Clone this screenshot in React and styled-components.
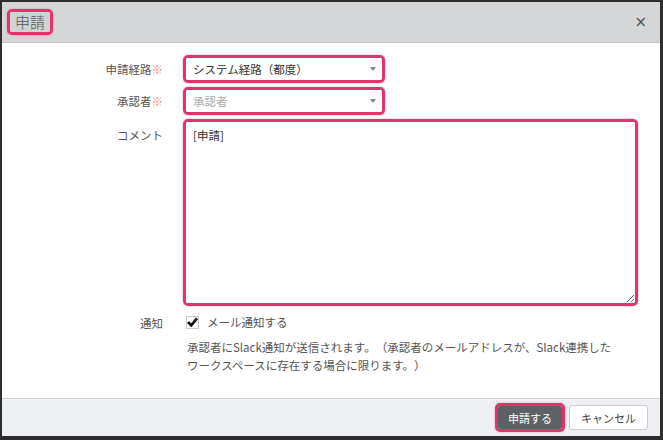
import React from 'react';
import styled, { createGlobalStyle } from 'styled-components';

const GlobalStyle = createGlobalStyle`
  html, body {
    margin: 0;
    padding: 0;
    background: #ffffff;
  }
  body {
    font-family: "Noto Sans CJK JP", "Noto Sans", sans-serif;
    color: #333;
    text-spacing-trim: space-all;
  }
`;

const Frame = styled.div`
  width: 663px;
  height: 440px;
  box-sizing: border-box;
  border-style: solid;
  border-color: #2e2e2e;
  border-width: 2px 3px 4px 2px;
  display: flex;
  flex-direction: column;
  background: #fff;
  overflow: hidden;
`;

/* pink annotation frame drawn around the highlighted parts */
const Highlight = styled.div`
  display: ${p => (p.$block ? 'flex' : 'inline-flex')};
  align-items: center;
  box-sizing: border-box;
  border: 3px solid #e2336b;
  border-radius: 5px;
  box-shadow: 0 0 2px rgba(226, 51, 107, 0.55);
  width: ${p => p.$width || 'auto'};
  height: ${p => p.$height || 'auto'};
  overflow: hidden;
`;

const Header = styled.div`
  height: 40px;
  flex-shrink: 0;
  background: #d4d6d8;
  border-bottom: 1px solid #c2c4c6;
  display: flex;
  align-items: center;
  justify-content: space-between;
  padding: 0 13px 0 5px;
`;

const Title = styled.span`
  font-size: 15px;
  line-height: 20px;
  font-weight: 300;
  color: #555;
  padding: 0 5px;
  background: #d0d2d4;
`;

const Close = styled.span`
  font-family: "DejaVu Sans", sans-serif;
  font-size: 15px;
  color: #555;
  line-height: 1;
`;

const Body = styled.div`
  flex: 1;
  display: grid;
  grid-template-columns: 161px 1fr;
  column-gap: 20px;
  row-gap: 4px;
  align-content: start;
  padding: 12px 22px 0 0;
`;

const Label = styled.div`
  font-size: 11.5px;
  color: #555;
  text-align: right;
  align-self: ${p => (p.$top ? 'start' : 'center')};
  padding-top: ${p => p.$pad || 0}px;
`;

const Required = styled.span`
  color: #f08a8a;
`;

const Select = styled.div`
  flex: 1;
  align-self: stretch;
  position: relative;
  background: #fff;
  font-size: 11.5px;
  line-height: 22px;
  padding: 0 7px;
  color: ${p => (p.$placeholder ? '#aaa' : '#333')};

  &::after {
    content: '';
    position: absolute;
    right: 6px;
    top: 9px;
    border-left: 3px solid transparent;
    border-right: 3px solid transparent;
    border-top: 4px solid #888;
  }
`;

const Comment = styled.textarea`
  flex: 1;
  align-self: stretch;
  border: none;
  outline: none;
  resize: both;
  margin: 0;
  padding: 5px 7px;
  font-family: "Noto Sans CJK JP", "Noto Sans", sans-serif;
  font-size: 11.5px;
  line-height: 16px;
  color: #333;
  background: #fff;
`;

const NotifyRow = styled.div`
  display: flex;
  align-items: center;
  gap: 8px;
  padding: 3px 0 0 3px;
`;

const Check = styled.span`
  width: 13px;
  height: 13px;
  box-sizing: border-box;
  border: 1px solid #ccc;
  display: inline-flex;
  align-items: center;
  justify-content: center;
  background: #fff;
`;

const CheckText = styled.span`
  font-size: 11.5px;
  color: #555;
`;

const Help = styled.p`
  grid-column: 2;
  margin: 3px 0 0;
  padding-left: 4px;
  font-size: 11.5px;
  line-height: 18px;
  color: #555;
`;

const Footer = styled.div`
  height: 37px;
  flex-shrink: 0;
  background: #eef0f3;
  border-top: 1px solid #cfd2d6;
  display: flex;
  align-items: center;
  justify-content: flex-end;
  gap: 4px;
  padding-right: 12px;
`;

const Button = styled.button`
  font-family: "Noto Sans CJK JP", "Noto Sans", sans-serif;
  font-size: 11px;
  height: ${p => (p.$primary ? '23px' : '25px')};
  padding: 0 ${p => (p.$primary ? '10px' : '11px')};
  border-radius: ${p => (p.$primary ? '0' : '3px')};
  border: ${p => (p.$primary ? 'none' : '1px solid #ccc')};
  background: ${p => (p.$primary ? '#5e6163' : '#fff')};
  color: ${p => (p.$primary ? '#fff' : '#444')};
  cursor: pointer;
`;

export default function App() {
  return (
    <>
      <GlobalStyle />
      <Frame>
        <Header>
          <Highlight $height="26px">
            <Title>申請</Title>
          </Highlight>
          <Close>×</Close>
        </Header>

        <Body>
          <Label>申請経路<Required>※</Required></Label>
          <Highlight $width="202px" $height="28px">
            <Select>システム経路（都度）</Select>
          </Highlight>

          <Label>承認者<Required>※</Required></Label>
          <Highlight $width="202px" $height="28px">
            <Select $placeholder>承認者</Select>
          </Highlight>

          <Label $top $pad={8}>コメント</Label>
          <Highlight $block $height="187px">
            <Comment defaultValue="[申請]" />
          </Highlight>

          <Label $top $pad={5}>通知</Label>
          <NotifyRow>
            <Check>
              <svg width="11" height="10" viewBox="0 0 11 10">
                <path d="M1 5 L4.2 8.4 L10 1.4" fill="none" stroke="#111" strokeWidth="2.6" />
              </svg>
            </Check>
            <CheckText>メール通知する</CheckText>
          </NotifyRow>

          <Help>
            承認者にSlack通知が送信されます。（承認者のメールアドレスが、Slack連携した<br />
            ワークスペースに存在する場合に限ります。）
          </Help>
        </Body>

        <Footer>
          <Highlight $height="29px">
            <Button $primary>申請する</Button>
          </Highlight>
          <Button>キャンセル</Button>
        </Footer>
      </Frame>
    </>
  );
}
